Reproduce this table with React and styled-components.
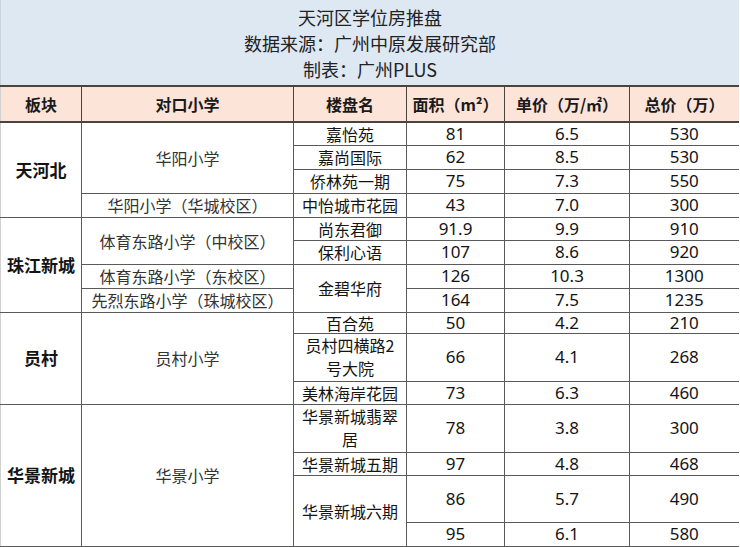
import React from 'react';
import styled, { createGlobalStyle } from 'styled-components';

const GlobalStyle = createGlobalStyle`
  html, body {
    margin: 0;
    padding: 0;
    background: #ffffff;
  }
  body {
    font-family: "Noto Sans CJK SC", sans-serif;
    color: #1a1a1a;
    text-spacing-trim: space-all;
    font-feature-settings: "chws" 0, "halt" 0, "palt" 0;
  }
`;

const Sheet = styled.div`
  width: 739px;
  height: 547px;
  overflow: hidden;
`;

const Caption = styled.div`
  height: 85px;
  box-sizing: border-box;
  padding-top: 4px;
  background: #dde8f3;
  border-left: 1px solid #c9d3de;
  display: flex;
  flex-direction: column;
  align-items: center;
`;

const CaptionLine = styled.div`
  font-size: 18px;
  line-height: 26px;
  color: #222;
`;

const Table = styled.table`
  width: 739px;
  border-collapse: collapse;
  table-layout: fixed;
`;

const HeadRow = styled.tr`
  height: 36px;
  background: #fce4d8;
`;

const Row = styled.tr`
  height: ${(p) => p.$h}px;
`;

const Th = styled.th`
  font-size: 16px;
  font-weight: 700;
  line-height: 20px;
  color: #1a1a1a;
  text-align: center;
  padding: 0;
  border-top: 2px solid #4a4440;
  border-bottom: 2px solid #4a4440;
  border-left: 1px solid #4a4440;
  border-right: 1px solid #4a4440;
  &:first-child {
    border-left: 1px solid #d0d0d0;
  }
`;

const Td = styled.td`
  font-family: ${(p) => (p.$num ? '"Noto Sans", sans-serif' : '"Noto Sans CJK SC", sans-serif')};
  font-size: ${(p) => (p.$area || p.$num ? '17px' : '16px')};
  font-weight: ${(p) => (p.$area ? 700 : 400)};
  color: ${(p) => (p.$school ? '#333' : '#141414')};
  line-height: ${(p) => (p.$wrap ? '23px' : '18px')};
  text-align: center;
  vertical-align: middle;
  padding: 0 6px;
  border: 1px solid #5a5a5a;
  border-top-color: ${(p) => (p.$section ? '#333' : '#5a5a5a')};
  &:first-child {
    border-left: 1px solid #d0d0d0;
  }
  &:last-child {
    border-right: 2px solid #555;
  }
`;

const rows = [
  { h: 23, area: ['天河北', 4], school: ['华阳小学', 3], name: ['嘉怡苑'], v: ['81', '6.5', '530'] },
  { h: 24, name: ['嘉尚国际'], v: ['62', '8.5', '530'] },
  { h: 24, name: ['侨林苑一期'], v: ['75', '7.3', '550'] },
  { h: 24, school: ['华阳小学（华城校区）', 1], name: ['中怡城市花园'], v: ['43', '7.0', '300'] },
  { h: 23, section: true, area: ['珠江新城', 4], school: ['体育东路小学（中校区）', 2], name: ['尚东君御'], v: ['91.9', '9.9', '910'] },
  { h: 24, name: ['保利心语'], v: ['107', '8.6', '920'] },
  { h: 24, school: ['体育东路小学（东校区）', 1], name: ['金碧华府', 2], v: ['126', '10.3', '1300'] },
  { h: 24, school: ['先烈东路小学（珠城校区）', 1], v: ['164', '7.5', '1235'] },
  { h: 21, section: true, area: ['员村', 3], school: ['员村小学', 3], name: ['百合苑'], v: ['50', '4.2', '210'] },
  { h: 48, name: ['员村四横路2号大院', 1, true], v: ['66', '4.1', '268'] },
  { h: 23, name: ['美林海岸花园'], v: ['73', '6.3', '460'] },
  { h: 48, section: true, area: ['华景新城', 4], school: ['华景小学', 4], name: ['华景新城翡翠居', 1, true], v: ['78', '3.8', '300'] },
  { h: 23, name: ['华景新城五期'], v: ['97', '4.8', '468'] },
  { h: 47, name: ['华景新城六期', 2], v: ['86', '5.7', '490'] },
  { h: 24, v: ['95', '6.1', '580'] },
];

const App = () => {
  return (
    <Sheet>
      <GlobalStyle />
      <Caption>
        <CaptionLine>天河区学位房推盘</CaptionLine>
        <CaptionLine>数据来源：广州中原发展研究部</CaptionLine>
        <CaptionLine>制表：广州PLUS</CaptionLine>
      </Caption>
      <Table>
        <colgroup>
          <col style={{ width: 81 }} />
          <col style={{ width: 212 }} />
          <col style={{ width: 113 }} />
          <col style={{ width: 98 }} />
          <col style={{ width: 125 }} />
          <col style={{ width: 110 }} />
        </colgroup>
        <thead>
          <HeadRow>
            <Th>板块</Th>
            <Th>对口小学</Th>
            <Th>楼盘名</Th>
            <Th>面积（m²）</Th>
            <Th>单价（万/㎡）</Th>
            <Th>总价（万）</Th>
          </HeadRow>
        </thead>
        <tbody>
          {rows.map((r, i) => (
            <Row key={i} $h={r.h}>
              {r.area && (
                <Td $area $section={r.section} rowSpan={r.area[1]}>
                  {r.area[0]}
                </Td>
              )}
              {r.school && (
                <Td $school $section={r.section} rowSpan={r.school[1]}>
                  {r.school[0]}
                </Td>
              )}
              {r.name && (
                <Td $section={r.section} $wrap={r.name[2]} rowSpan={r.name[1] || 1}>
                  {r.name[0]}
                </Td>
              )}
              {r.v.map((val, j) => (
                <Td key={j} $num $section={r.section}>
                  {val}
                </Td>
              ))}
            </Row>
          ))}
        </tbody>
      </Table>
    </Sheet>
  );
};

export default App;
